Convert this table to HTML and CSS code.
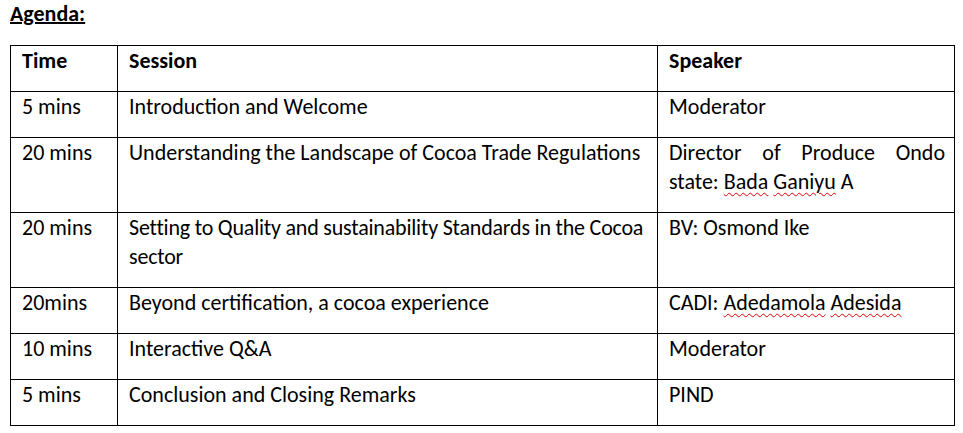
FILE: index.html
```html
<!DOCTYPE html>
<html>
<head>
<meta charset="utf-8">
<link rel="stylesheet" href="styles.css">
</head>
<body>
<h1 class="title">Agenda:</h1>
<table class="agenda">
  <colgroup>
    <col class="c-time">
    <col class="c-session">
    <col class="c-speaker">
  </colgroup>
  <tr class="head"><td>Time</td><td>Session</td><td>Speaker</td></tr>
  <tr><td>5 mins</td><td>Introduction and Welcome</td><td>Moderator</td></tr>
  <tr><td>20 mins</td><td>Understanding the Landscape of Cocoa Trade Regulations</td><td class="just">Director of Produce Ondo state: <span class="sq">Bada</span> <span class="sq">Ganiyu</span> A</td></tr>
  <tr><td>20 mins</td><td class="tight">Setting to Quality and sustainability Standards in the Cocoa sector</td><td>BV: Osmond Ike</td></tr>
  <tr><td>20mins</td><td>Beyond certification, a cocoa experience</td><td>CADI: <span class="sq">Adedamola</span> <span class="sq">Adesida</span></td></tr>
  <tr><td>10 mins</td><td>Interactive Q&amp;A</td><td>Moderator</td></tr>
  <tr><td>5 mins</td><td>Conclusion and Closing Remarks</td><td>PIND</td></tr>
</table>
</body>
</html>
```
FILE: styles.css
```css
html, body { margin: 0; padding: 0; background: #fff; }
body {
  font-family: Carlito, Calibri, Lato, sans-serif;
  font-size: 22px;
  color: #000;
  padding: 0 0 0 10px;
}
.title {
  margin: 0;
  padding-top: 0;
  font-size: 22px;
  font-weight: bold;
  text-decoration: underline;
  text-decoration-thickness: 2px;
  text-underline-offset: 1px;
  line-height: 27px;
  height: 45px;
}
.agenda {
  border-collapse: collapse;
  table-layout: fixed;
  width: 944px;
}
.c-time { width: 107px; }
.c-session { width: 540px; }
.c-speaker { width: 297px; }
.agenda td {
  border: 1px solid #000;
  padding: 0 3px 16px 11px;
  line-height: 29px;
  vertical-align: top;
}
.agenda td.just { padding-right: 9px; }
.agenda td.tight { letter-spacing: -0.2px; }
.head td { font-weight: bold; }
.just { text-align: justify; }
.sq {
  text-decoration: underline wavy #d00;
  text-decoration-thickness: 1px;
  text-underline-offset: 3px;
}
```
